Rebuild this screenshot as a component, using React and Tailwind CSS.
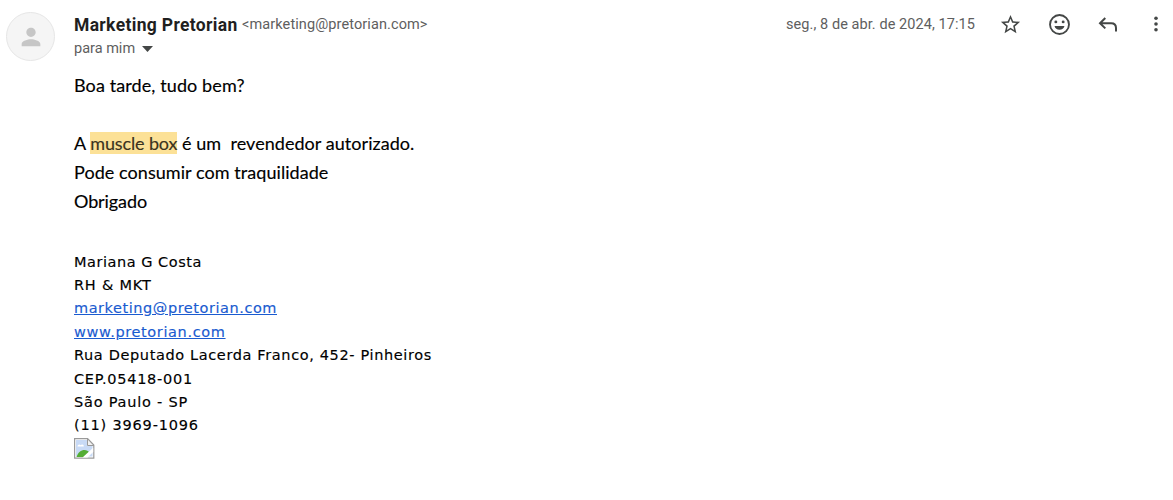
import React from 'react';

const SIGNATURE = [
  { text: 'Mariana G Costa', className: 'tracking-[0.53px]' },
  { text: 'RH & MKT', className: 'tracking-[0.8px]' },
  { text: 'marketing@pretorian.com', link: true, className: 'tracking-[0.55px]' },
  { text: 'www.pretorian.com', link: true, className: 'tracking-[0.63px]' },
  { text: 'Rua Deputado Lacerda Franco, 452- Pinheiros', className: 'tracking-[0.63px]' },
  { text: 'CEP.05418-001', className: 'tracking-[0.73px]' },
  { text: 'São Paulo - SP', className: 'tracking-[0.78px]' },
  { text: '(11) 3969-1096', className: 'tracking-[0.82px]' },
];

const Avatar = () => (
  <div className="mt-3 ml-1.5 flex h-[49px] w-[49px] shrink-0 items-center justify-center rounded-full border border-[#e6e6e6] bg-[#f5f5f5]">
    <svg width="28" height="28" viewBox="0 0 24 24" fill="#c6c6c6">
      <path d="M12 12c2.21 0 4-1.79 4-4s-1.79-4-4-4-4 1.79-4 4 1.79 4 4 4zm0 2c-2.67 0-8 1.34-8 4v2h16v-2c0-2.66-5.33-4-8-4z" />
    </svg>
  </div>
);

const StarIcon = () => (
  <svg width="23" height="23" viewBox="0 0 24 24" fill="#444746">
    <path d="M22 9.24l-7.19-.62L12 2 9.19 8.63 2 9.24l5.46 4.73L5.82 21 12 17.27 18.18 21l-1.63-7.03L22 9.24zM12 15.4l-3.76 2.27 1-4.28-3.32-2.88 4.38-.38L12 6.1l1.71 4.04 4.38.38-3.32 2.88 1 4.28L12 15.4z" />
  </svg>
);

const SmileIcon = () => (
  <svg width="25" height="25" viewBox="0 0 24 24" fill="#444746">
    <path d="M12 2a10 10 0 1 0 0 20 10 10 0 0 0 0-20zm0 18.200a8.200 8.200 0 1 1 0-16.400 8.200 8.200 0 0 1 0 16.400z" />
    <circle cx="8.5" cy="9.5" r="1.4" />
    <circle cx="15.5" cy="9.5" r="1.4" />
    <path d="M7.2 13.5h9.600a5 5 0 0 1-9.600 0z" />
  </svg>
);

const ReplyIcon = () => (
  <svg width="20" height="16" viewBox="0 0 20 16" fill="none" stroke="#444746" strokeWidth="2">
    <path d="M7.3 1L2 6.200l5.300 5.200M2 6.200h11.200c2.900 0 4.800 1.900 4.800 4.800v3.600" />
  </svg>
);

const MoreIcon = () => (
  <svg width="6" height="16" viewBox="0 0 6 16" fill="#444746">
    <circle cx="3" cy="2.3" r="1.8" />
    <circle cx="3" cy="8" r="1.8" />
    <circle cx="3" cy="13.7" r="1.8" />
  </svg>
);

const BrokenImage = () => (
  <svg width="21" height="21" viewBox="0 0 21 21">
    <path d="M1 1h12.500L20 7v13H1z" fill="#fff" />
    <path d="M2 2h11.500v6H18.500v10.500H2z" fill="#c8daf6" />
    <path d="M3.500 8.500c0-2 2.200-2.600 3.200-1.200C8 5.800 10.200 7 9.800 8.500z" fill="#fff" />
    <path d="M2.500 19c1.500-4.500 4.500-7 8-7 2.200 0 3.600 1 4.500 2.200L10 19z" fill="#54ad35" />
    <path d="M13.500 1v6.500H20" fill="#f1f1f1" stroke="#9a9a9a" />
    <path d="M.6 20.200V.6h13L19.800 7v13.200H.6z" fill="none" stroke="#9a9a9a" strokeWidth="1.2" />
    <path d="M8.500 19.600L19.200 9.800v4.200L13.500 19.600z" fill="#fff" />
  </svg>
);

const Header = () => (
  <div className="flex h-[60px] justify-between font-[Roboto,sans-serif] text-[14.5px] text-[#5e5e5e]">
    <div className="pt-[13px]">
      <div className="flex h-6 items-center whitespace-nowrap">
        <span className="w-[168px] text-[17.5px] font-bold tracking-[0.34px] text-[#1f1f1f]">Marketing Pretorian</span>
        <span className="tracking-[0.1px]">&lt;marketing@pretorian.com&gt;</span>
      </div>
      <div className="flex h-6 items-center">
        <span className="w-[68px]">para mim</span>
        <svg width="11" height="6" viewBox="0 0 11 6" fill="#444746"><path d="M0 0h11L5.500 6z" /></svg>
      </div>
    </div>
    <div className="flex h-12 items-center">
      <span className="mr-[23px] w-[190px] whitespace-nowrap pt-0.5 tracking-[0.07px]">seg., 8 de abr. de 2024, 17:15</span>
      <div className="flex w-[48px]"><StarIcon /></div>
      <div className="flex w-[51px]"><SmileIcon /></div>
      <div className="flex w-[55px] pt-0.5"><ReplyIcon /></div>
      <div className="mr-[14px] flex"><MoreIcon /></div>
    </div>
  </div>
);

export default function App() {
  return (
    <div className="flex h-[500px] w-[1173px] overflow-hidden bg-white">
      <Avatar />
      <div className="ml-[19px] flex-1">
        <Header />
        <div className="pt-[11px] font-[Lato,sans-serif] text-[18px] leading-[29px] text-black [-webkit-text-stroke:0.15px]">
          <p className="tracking-[0.1px]">Boa tarde, tudo bem?</p>
          <p>&nbsp;</p>
          <p className="tracking-[0.05px]">A <mark className="bg-[#fce197] tracking-[-0.14px] text-[#3b3320]">muscle box</mark> é um &nbsp;revendedor autorizado.</p>
          <p className="tracking-[0.06px]">Pode consumir com traquilidade</p>
          <p className="tracking-[-0.1px]">Obrigado</p>
        </div>
        <div className="pt-[34.5px] font-['DejaVu_Sans',sans-serif] text-[14.5px] leading-[23.4px] text-black [-webkit-text-stroke:0.15px]">
          {SIGNATURE.map(({ text, link, className }) => (
            <p key={text} className={className}>
              {link ? <a className="text-[#1a5bd0] underline">{text}</a> : text}
            </p>
          ))}
        </div>
        <BrokenImage />
      </div>
    </div>
  );
}
